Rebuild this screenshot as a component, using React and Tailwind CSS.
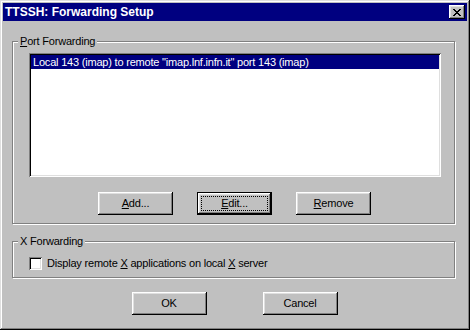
import React from "react";

const raised =
  "shadow-[inset_-1px_-1px_0_#000,inset_1px_1px_0_#fff,inset_-2px_-2px_0_#808080,inset_2px_2px_0_#dfdfdf]";
const sunken =
  "shadow-[inset_1px_1px_0_#808080,inset_-1px_-1px_0_#fff,inset_2px_2px_0_#000,inset_-2px_-2px_0_#dfdfdf]";

function U({ children }) {
  return <span className="underline underline-offset-[1px] decoration-1">{children}</span>;
}

function Button({ children, isDefault }) {
  return (
    <div
      className={
        "w-[75px] h-[23px] bg-[#c0c0c0] flex items-center justify-center text-black " +
        (isDefault
          ? "shadow-[inset_0_0_0_1px_#000,inset_-2px_-2px_0_#000,inset_2px_2px_0_#fff,inset_-3px_-3px_0_#808080,inset_3px_3px_0_#dfdfdf]"
          : raised)
      }
    >
      {isDefault ? (
        <div className="w-[67px] h-[15px] border border-dotted border-black flex items-center justify-center">
          {children}
        </div>
      ) : (
        children
      )}
    </div>
  );
}

function Group({ label, className, children }) {
  return (
    <div
      className={
        "relative w-[443px] border border-[#808080] shadow-[inset_1px_1px_0_#fff,1px_1px_0_#fff] " +
        className
      }
    >
      <div className="absolute -top-[8px] left-[5px] px-[2px] bg-[#c0c0c0] leading-[14px]">
        {label}
      </div>
      {children}
    </div>
  );
}

export default function App() {
  return (
    <div
      className="w-[470px] h-[330px] bg-[#c0c0c0] p-[3px] flex flex-col shadow-[inset_-1px_-1px_0_#000,inset_1px_1px_0_#dfdfdf,inset_-2px_-2px_0_#808080,inset_2px_2px_0_#fff] text-[11px] tracking-[-0.2px] text-black"
      style={{ fontFamily: '"Liberation Sans", Arial, sans-serif' }}
    >
      <div className="h-[18px] bg-[#000080] flex items-center justify-between pl-[2px] pr-[2px]">
        <span className="text-white font-bold text-[12px] tracking-normal leading-none">
          TTSSH: Forwarding Setup
        </span>
        <div className={"w-[16px] h-[14px] bg-[#c0c0c0] flex items-center justify-center " + raised}>
          <svg width="8" height="7" viewBox="0 0 8 7" shapeRendering="crispEdges">
            <path
              d="M0 0h2v1h-2zM6 0h2v1h-2zM1 1h2v1h-2zM5 1h2v1h-2zM2 2h4v1h-4zM3 3h2v1h-2zM2 4h4v1h-4zM1 5h2v1h-2zM5 5h2v1h-2zM0 6h2v1h-2zM6 6h2v1h-2z"
              fill="#000"
            />
          </svg>
        </div>
      </div>

      <div className="flex flex-col pl-[9px]">
        <Group label={<><U>P</U>ort Forwarding</>} className="mt-[20px] h-[183px]">
          <div className={"mt-[11px] ml-[16px] w-[412px] h-[124px] bg-white p-[2px] " + sunken}>
            <div className="h-[14px] bg-[#000080] text-white pl-[2px] leading-[14px] whitespace-nowrap">
              Local 143 (imap) to remote "imap.lnf.infn.it" port 143 (imap)
            </div>
          </div>
          <div className="mt-[15px] flex justify-center gap-[24px] pl-[2px]">
            <Button><span><U>A</U>dd...</span></Button>
            <Button isDefault><span><U>E</U>dit...</span></Button>
            <Button><span><U>R</U>emove</span></Button>
          </div>
        </Group>

        <Group label="X Forwarding" className="mt-[17px] h-[37px]">
          <div className="mt-[15px] ml-[16px] flex items-center">
            <div className={"w-[13px] h-[13px] bg-white " + sunken} />
            <span className="ml-[5px] leading-[13px]">
              Display remote <U>X</U> applications on local <U>X</U> server
            </span>
          </div>
        </Group>

        <div className="mt-[14px] flex justify-center gap-[56px] pr-[10px]">
          <Button>OK</Button>
          <Button>Cancel</Button>
        </div>
      </div>
    </div>
  );
}
